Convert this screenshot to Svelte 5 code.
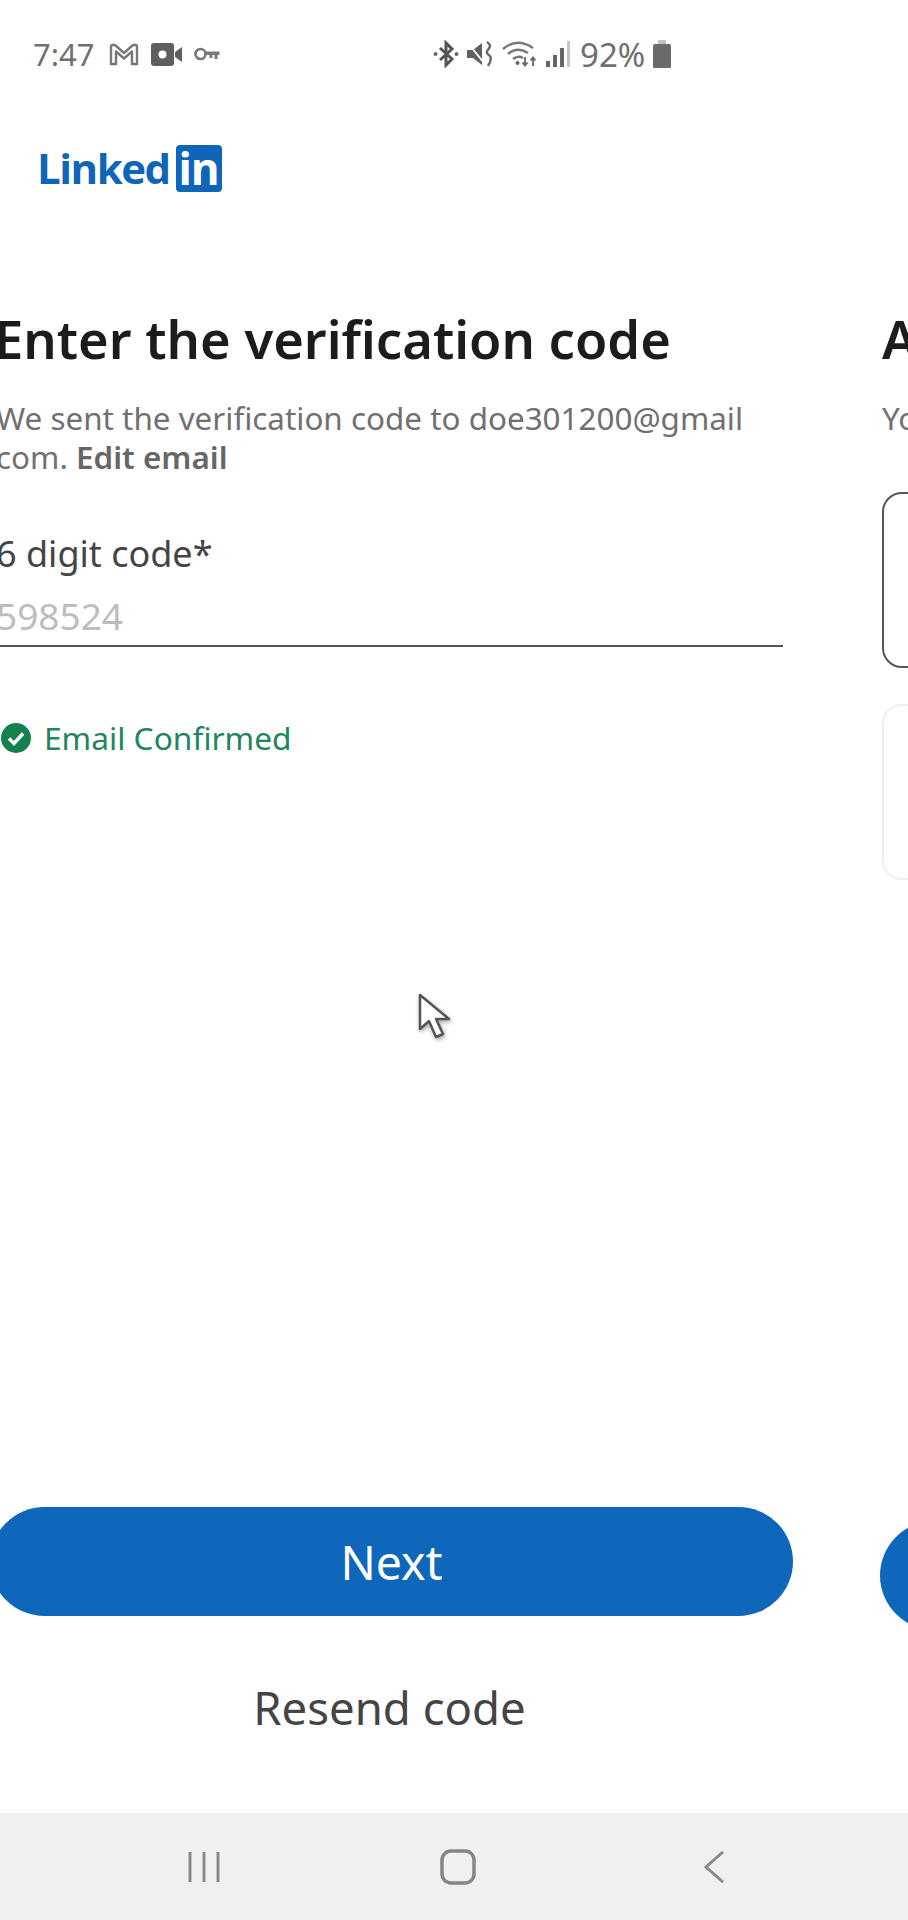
<script>
  let code = '598524';
</script>

<main class="screen">
  <div class="status">
    <div class="left">
      <span class="time">7:47</span>
      <svg class="ic-m" width="30" height="23" viewBox="0 0 30 23"><path d="M2 21V3.500Q2 2 3.500 2H6L15 10L24 2H26.500Q28 2 28 3.500V21H23V8.500L15 15.500L7 8.500V21Z" fill="none" stroke="#777" stroke-width="2.400" stroke-linejoin="round"/></svg>
      <svg class="ic-v" width="31" height="23" viewBox="0 0 31 23"><rect width="23" height="23" rx="3" fill="#5f5f5f"/><circle cx="11.500" cy="11.500" r="4" fill="#fff"/><path d="M24 9L31 4V19L24 14Z" fill="#5f5f5f"/></svg>
      <svg class="ic-k" width="26" height="14" viewBox="0 0 26 14"><circle cx="6.500" cy="7" r="5" fill="none" stroke="#777" stroke-width="2.600"/><path d="M11.500 4.500H25.500V8H23.500V12H20.500V8H18.500V11H15.500V8H11.500Z" fill="#777"/></svg>
    </div>
    <div class="right">
      <svg width="26" height="28" viewBox="0 0 26 28"><path d="M7 8L19 19L13 25V3L19 9L7 20" fill="none" stroke="#555" stroke-width="3"/><circle cx="2.500" cy="14" r="2" fill="#666"/><circle cx="23.500" cy="14" r="2" fill="#666"/></svg>
      <svg width="27" height="28" viewBox="0 0 27 28"><path d="M0 10H6L15 3V25L6 18H0Z" fill="#5f5f5f"/><path d="M1 3L17 23" stroke="#fff" stroke-width="2"/><path d="M20 2Q25 5 21.500 9Q18 13 22 15Q26 18 21 26" fill="none" stroke="#666" stroke-width="2.400"/></svg>
      <svg width="35" height="28" viewBox="0 0 35 28"><g fill="none" stroke="#777" stroke-width="2.400"><path d="M1 9Q15 -3 31 8"/><path d="M6 14Q15 6 26 13"/><path d="M11 19Q16 15 21 18"/></g><circle cx="15.500" cy="23" r="2" fill="#666"/><path d="M23 17V25M20.500 22.500L23 25.500L25.500 22.500M31 26V18M28.500 20.500L31 17.500L33.500 20.500" fill="none" stroke="#666" stroke-width="1.800"/></svg>
      <svg width="26" height="28" viewBox="0 0 26 28"><rect x="1" y="21" width="4" height="6" fill="#666"/><rect x="8" y="15" width="4" height="12" fill="#666"/><rect x="15" y="8" width="4" height="19" fill="#666"/><rect x="22" y="1" width="3" height="26" fill="#c4c4c4"/></svg>
      <span class="pct">92%</span>
      <svg width="18" height="28" viewBox="0 0 18 28"><rect x="5" y="0" width="8" height="4" fill="#c2c2c2"/><rect x="0" y="4" width="18" height="24" rx="1.500" fill="#6a6a6a"/></svg>
    </div>
  </div>

  <div class="logo">
    <span class="linked">Linked</span>
    <span class="in">in</span>
  </div>

  <div class="track">
    <section class="slide first">
      <h1>Enter the verification code</h1>
      <p class="sub">We sent the verification code to doe301200@gmail<br>com. <b>Edit email</b></p>
      <div class="label">6 digit code*</div>
      <div class="input">{code}</div>
      <div class="ok">
        <svg width="30" height="30" viewBox="0 0 30 30"><circle cx="15" cy="15" r="15" fill="#12804f"/><path d="M8 15.500L13 20.500L22 10.500" fill="none" stroke="#fff" stroke-width="3.500"/></svg>
        <span>Email Confirmed</span>
      </div>
      <button class="next">Next</button>
      <div class="resend">Resend code</div>
    </section>

    <section class="slide second">
      <h1>Add your phone</h1>
      <p class="sub">You can choose</p>
      <div class="card active"></div>
      <div class="card"></div>
      <button class="next">Next</button>
    </section>
  </div>

  <div class="nav">
    <svg width="32" height="32" viewBox="0 0 32 32"><path d="M2 1V31M16 1V31M30 1V31" stroke="#8a8a8a" stroke-width="3"/></svg>
    <svg width="36" height="36" viewBox="0 0 36 36"><rect x="2" y="2" width="32" height="32" rx="9" fill="none" stroke="#858585" stroke-width="3.500"/></svg>
    <svg class="back" width="22" height="32" viewBox="0 0 22 32"><path d="M20 1L3 16L20 31" fill="none" stroke="#8a8a8a" stroke-width="3"/></svg>
  </div>

  <svg class="cursor" width="36" height="48" viewBox="0 0 36 48">
    <path d="M2 2V36L11 28L18 44L25 41L18 26H31Z" fill="#fff" stroke="#555" stroke-width="2.500" stroke-linejoin="round"/>
  </svg>
</main>

<style>
  :global(body) {
    background: #fff;
  }
  .screen {
    position: relative;
    width: 908px;
    height: 1920px;
    display: flex;
    flex-direction: column;
    overflow: hidden;
    background: #fff;
    font-family: "Noto Sans", sans-serif;
  }
  .status {
    height: 108px;
    flex-shrink: 0;
    display: flex;
    align-items: center;
    padding-left: 33px;
    color: #6f6f6f;
    font-size: 31px;
  }
  .left {
    display: flex;
    align-items: center;
    gap: 12px;
    width: 400px;
  }
  .left .time {
    margin-right: 2px;
  }
  .right {
    display: flex;
    align-items: center;
    gap: 8px;
  }
  .pct {
    font-size: 33px;
    margin-left: 1px;
  }
  .logo {
    height: 60px;
    margin-top: 30px;
    padding-left: 37px;
    display: flex;
    align-items: center;
    gap: 6px;
    flex-shrink: 0;
  }
  .linked {
    color: #0f66b8;
    font-family: "Open Sans", sans-serif;
    font-weight: 700;
    font-size: 42px;
    letter-spacing: -1.500px;
    line-height: 1;
  }
  .in {
    width: 46px;
    height: 47px;
    border-radius: 4px;
    background: #0f66b8;
    color: #fff;
    font-family: "Open Sans", sans-serif;
    font-weight: 700;
    font-size: 44px;
    letter-spacing: -1px;
    line-height: 47px;
    text-align: center;
  }
  .track {
    flex: 1;
    display: flex;
    margin-left: -4px;
    padding-top: 107px;
    gap: 99px;
    min-height: 0;
  }
  .slide {
    width: 787px;
    flex-shrink: 0;
    display: flex;
    flex-direction: column;
  }
  h1 {
    margin: 0;
    font-size: 52.500px;
    line-height: 68px;
    font-weight: 600;
    color: #1c1c1c;
    white-space: nowrap;
  }
  .first h1 {
    margin-left: -2px;
  }
  .sub {
    margin: 25px 0 0;
    font-size: 31.400px;
    line-height: 39px;
    color: #707070;
    white-space: nowrap;
  }
  .sub b {
    font-weight: 600;
    color: #666;
  }
  .label {
    margin-top: 55px;
    font-size: 36px;
    line-height: 45px;
    color: #444;
  }
  .input {
    margin-top: 17px;
    padding-bottom: 7px;
    font-size: 37px;
    line-height: 45px;
    color: #bdbdbd;
    border-bottom: 2px solid #555;
  }
  .ok {
    margin-top: 71px;
    display: flex;
    align-items: center;
    gap: 13px;
    padding-left: 5px;
    font-size: 31.700px;
    line-height: 40px;
    color: #1e8560;
  }
  .next {
    margin: auto -10px 0 -6px;
    height: 109px;
    border: 0;
    border-radius: 55px;
    background: #0f67bb;
    color: #fff;
    font-family: inherit;
    font-size: 46.500px;
    flex-shrink: 0;
  }
  .resend {
    margin-top: 60px;
    margin-bottom: 75px;
    text-align: center;
    font-size: 45.500px;
    line-height: 62px;
    color: #444;
    flex-shrink: 0;
  }
  .second .next {
    margin: auto -2px 183px;
  }
  .card {
    height: 176px;
    margin-top: 36px;
    border: 2px solid #eee;
    border-radius: 20px;
    box-sizing: border-box;
  }
  .card.active {
    border-color: #555;
    margin-top: 55px;
  }
  .nav {
    height: 107px;
    flex-shrink: 0;
    background: #f0f0f0;
    display: flex;
    align-items: center;
    padding-left: 188px;
    gap: 220px;
  }
  .back {
    margin-left: 7px;
  }
  .cursor {
    position: absolute;
    left: 418px;
    top: 993px;
    filter: drop-shadow(1px 2px 2px rgba(0, 0, 0, 0.35));
  }
</style>
